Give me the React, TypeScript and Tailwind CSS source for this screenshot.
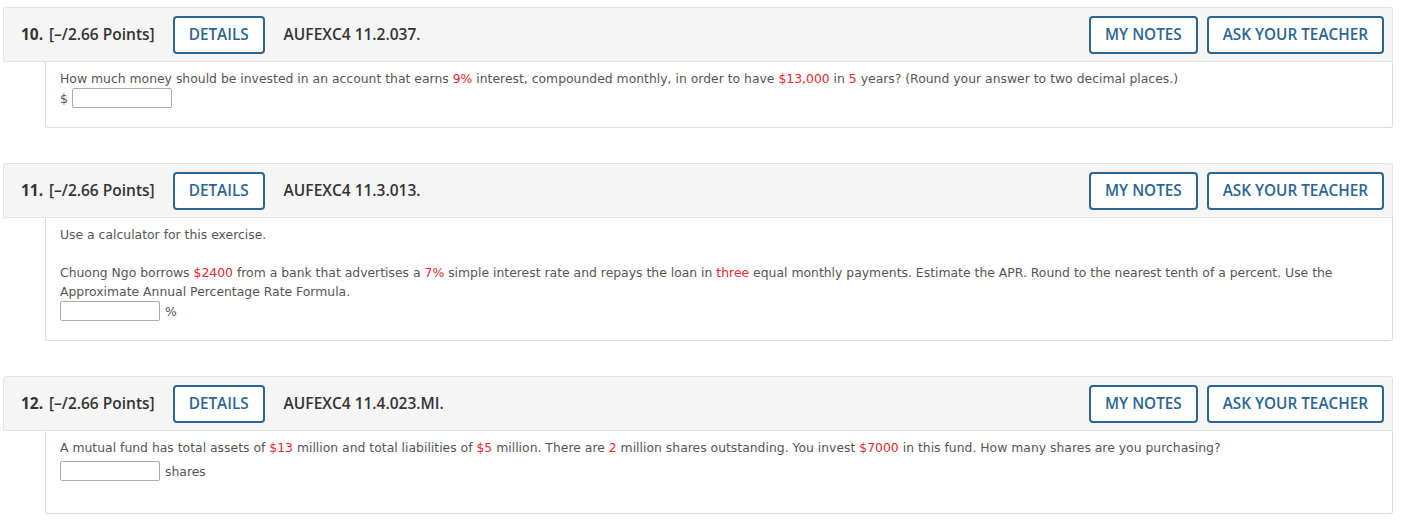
import React from 'react';

const R: React.FC<{ children: React.ReactNode }> = ({ children }) => (
  <span className="text-[#e8262c]">{children}</span>
);

const btn =
  'h-[38px] px-[14px] border-2 border-[#2b6592] rounded-[4px] text-[15.3px] font-semibold text-[#2b6592] bg-white';

const Header: React.FC<{ num: string; code: string }> = ({ num, code }) => (
  <div className="flex items-center h-[55px] ml-[3px] mr-[11px] pl-[17px] pr-[8px] bg-[#f5f5f5] border border-[#e2e2e2] rounded-t-[3px] font-['Open_Sans',sans-serif] text-[15.5px] text-[#333]">
    <span className="font-bold w-[28px]">{num}</span>
    <span className="font-semibold">[–/2.66 Points]</span>
    <button className={'ml-[18px] ' + btn}>DETAILS</button>
    <span className="ml-[19px] font-semibold text-[15.5px]">{code}</span>
    <div className="ml-auto flex gap-[9px]">
      <button className={btn}>MY NOTES</button>
      <button className={btn}>ASK YOUR TEACHER</button>
    </div>
  </div>
);

const Body: React.FC<{ children: React.ReactNode; pad: string }> = ({ children, pad }) => (
  <div className="ml-[45px] mr-[11px] border-x border-b border-[#dcdcdc] rounded-b-[3px]">
    <div className="px-[14px] font-['DejaVu_Sans',Verdana,sans-serif] text-[12.4px] leading-[19px] text-[#555]">
      <div className={pad}>{children}</div>
    </div>
  </div>
);

const Input: React.FC = () => (
  <span className="inline-block align-middle w-[100px] h-[20px] border border-[#a9a9a9] rounded-[2px] bg-white" />
);

export default function App() {
  return (
    <div className="w-[1404px] h-[524px] bg-white overflow-hidden pt-[7px]">
      <div>
        <Header num="10." code="AUFEXC4 11.2.037." />
        <Body pad="pt-[7px] pb-[19px]">
          <p>
            How much money should be invested in an account that earns <R>9%</R> interest, compounded monthly, in order
            to have <R>$13,000</R> in <R>5</R> years? (Round your answer to two decimal places.)
          </p>
          <div className="flex items-center gap-[4px] h-[20px]">
            <span>$</span>
            <Input />
          </div>
        </Body>
      </div>

      <div className="mt-[35px]">
        <Header num="11." code="AUFEXC4 11.3.013." />
        <Body pad="pt-[7px] pb-[19px]">
          <p>Use a calculator for this exercise.</p>
          <p className="mt-[19px]">
            Chuong Ngo borrows <R>$2400</R> from a bank that advertises a <R>7%</R> simple interest rate and repays the
            loan in <R>three</R> equal monthly payments. Estimate the APR. Round to the nearest tenth of a percent. Use
            the Approximate Annual Percentage Rate Formula.
          </p>
          <div className="flex items-center gap-[5px] h-[20px]">
            <Input />
            <span>%</span>
          </div>
        </Body>
      </div>

      <div className="mt-[35px]">
        <Header num="12." code="AUFEXC4 11.4.023.MI." />
        <Body pad="pt-[7px] pb-[32px]">
          <p>
            A mutual fund has total assets of <R>$13</R> million and total liabilities of <R>$5</R> million. There are{' '}
            <R>2</R> million shares outstanding. You invest <R>$7000</R> in this fund. How many shares are you
            purchasing?
          </p>
          <div className="flex items-center gap-[5px] h-[20px] mt-[4px]">
            <Input />
            <span>shares</span>
          </div>
        </Body>
      </div>
    </div>
  );
}
